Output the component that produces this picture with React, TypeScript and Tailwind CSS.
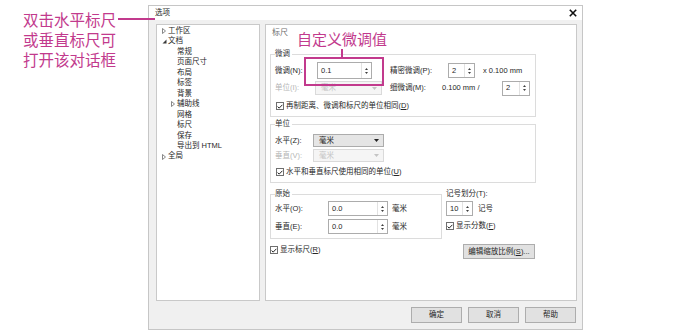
import React from "react";

type Node = { label: string; level: number; icon?: "open" | "closed" };

const treeItems: Node[] = [
  { label: "工作区", level: 0, icon: "closed" },
  { label: "文档", level: 0, icon: "open" },
  { label: "常规", level: 1 },
  { label: "页面尺寸", level: 1 },
  { label: "布局", level: 1 },
  { label: "标签", level: 1 },
  { label: "背景", level: 1 },
  { label: "辅助线", level: 1, icon: "closed" },
  { label: "网格", level: 1 },
  { label: "标尺", level: 1 },
  { label: "保存", level: 1 },
  { label: "导出到 HTML", level: 1 },
  { label: "全局", level: 0, icon: "closed" },
];

const TreeIcon = ({ icon }: { icon?: "open" | "closed" }) => {
  if (icon === "closed")
    return (
      <svg width="4" height="6" viewBox="0 0 4 6" className="block">
        <path d="M0.5 0.5 L3.5 3 L0.5 5.5 Z" fill="none" stroke="#6b6b6b" strokeWidth="0.8" />
      </svg>
    );
  if (icon === "open")
    return (
      <svg width="5" height="5" viewBox="0 0 5 5" className="block">
        <path d="M4.5 0.5 L4.5 4.5 L0.5 4.5 Z" fill="#3a3a3a" />
      </svg>
    );
  return null;
};

const Spin = ({ value, className }: { value: string; className: string }) => (
  <div className={`flex border border-[#acacac] bg-white ${className}`}>
    <span className="flex flex-1 items-center pl-[3px]">{value}</span>
    <div className="flex w-[10px] flex-col items-center justify-center gap-[2px] border-l border-[#e2e2e2]">
      <svg width="3" height="2" viewBox="0 0 3 2" className="block">
        <path d="M1.5 0 L3 2 L0 2 Z" fill="#404040" />
      </svg>
      <svg width="3" height="2" viewBox="0 0 3 2" className="block">
        <path d="M0 0 L3 0 L1.5 2 Z" fill="#404040" />
      </svg>
    </div>
  </div>
);

const Select = ({
  value,
  disabled,
  className,
}: {
  value: string;
  disabled?: boolean;
  className: string;
}) => (
  <div
    className={`flex items-center justify-between border pl-[5px] pr-[4px] ${
      disabled
        ? "border-[#dadada] bg-[#f5f5f5] text-[#c4c4c4]"
        : "border-[#acacac] bg-[#e5e5e5] text-[#222]"
    } ${className}`}
  >
    <span>{value}</span>
    <svg width="5" height="3" viewBox="0 0 5 3" className="block">
      <path d="M0 0 L5 0 L2.5 3 Z" fill={disabled ? "#c4c4c4" : "#222"} />
    </svg>
  </div>
);

const Check = ({ children, className = "" }: { children: React.ReactNode; className?: string }) => (
  <div className={`flex h-[12px] items-center gap-[2px] ${className}`}>
    <span className="flex h-[8px] w-[8px] items-center justify-center border border-[#6f6f6f] bg-white">
      <svg width="6" height="5" viewBox="0 0 6 5" className="block">
        <path d="M0.6 2.6 L2.2 4.1 L5.4 0.8" fill="none" stroke="#222" strokeWidth="1" />
      </svg>
    </span>
    <span>{children}</span>
  </div>
);

const Group = ({
  title,
  className,
  children,
}: {
  title: string;
  className: string;
  children: React.ReactNode;
}) => (
  <fieldset className={`min-w-0 border border-[#dcdcdc] px-[4px] pb-[4px] ${className}`}>
    <legend className="pr-[2px] leading-[10px] text-[#333]">{title}</legend>
    {children}
  </fieldset>
);

const Tree = () => (
  <div className="w-[104px] shrink-0 border border-[#c9c9c9] bg-white pt-[1px] leading-[10.45px]">
    {treeItems.map((item) => (
      <div
        key={item.label}
        className={`flex items-center ${item.level === 0 ? "pl-[5px]" : "pl-[14px]"}`}
      >
        <span className="flex w-[6px] items-center">
          <TreeIcon icon={item.icon} />
        </span>
        <span>{item.label}</span>
      </div>
    ))}
  </div>
);

const RulerPanel = () => (
  <div className="flex-1 border border-[#c9c9c9] bg-white pl-[4px] pt-[2px]">
    <div className="ml-[2px] text-[8px] leading-[12px] text-[#707070]">标尺</div>

    <Group title="微调" className="mt-[10px] w-[266px]">
      <div className="mt-[3px] flex h-[17px] items-center">
        <span className="w-[42px]">微调(N):</span>
        <Spin value="0.1" className="h-[17px] w-[55px]" />
        <span className="ml-[18px] w-[58px]">精密微调(P):</span>
        <Spin value="2" className="h-[15px] w-[27px]" />
        <span className="ml-[8px]">x 0.100 mm</span>
      </div>
      <div className="mt-[1px] flex h-[16px] items-center">
        <span className="w-[40px] text-[#b4b4b4]">单位(I):</span>
        <Select value="毫米" disabled className="h-[14px] w-[67px]" />
        <span className="ml-[8px] w-[52px]">细微调(M):</span>
        <span className="w-[60px]">0.100 mm /</span>
        <Spin value="2" className="h-[15px] w-[28px]" />
      </div>
      <Check className="ml-[1px] mt-[4px]">
        再制距离、微调和标尺的单位相同(<span className="underline">D</span>)
      </Check>
    </Group>

    <Group title="单位" className="mt-[2px] w-[266px]">
      <div className="mt-[5px] flex h-[13px] items-center">
        <span className="w-[38px]">水平(Z):</span>
        <Select value="毫米" className="h-[13px] w-[71px]" />
      </div>
      <div className="mt-[2px] flex h-[13px] items-center">
        <span className="w-[38px] text-[#b4b4b4]">垂直(V):</span>
        <Select value="毫米" disabled className="h-[13px] w-[71px]" />
      </div>
      <Check className="ml-[1px] mt-[4px]">
        水平和垂直标尺使用相同的单位(<span className="underline">U</span>)
      </Check>
    </Group>

    <div className="mt-[6px] flex">
      <Group title="原始" className="w-[172px]">
        <div className="mt-[2px] flex h-[15px] items-center">
          <span className="w-[53px]">水平(O):</span>
          <Spin value="0.0" className="h-[15px] w-[60px]" />
          <span className="ml-[4px]">毫米</span>
        </div>
        <div className="mt-[3px] flex h-[15px] items-center">
          <span className="w-[53px]">垂直(E):</span>
          <Spin value="0.0" className="h-[15px] w-[60px]" />
          <span className="ml-[4px]">毫米</span>
        </div>
      </Group>
      <div className="ml-[4px] flex flex-col">
        <span className="leading-[10px]">记号划分(T):</span>
        <div className="mt-[2px] flex h-[15px] items-center">
          <Spin value="10" className="h-[15px] w-[27px]" />
          <span className="ml-[5px]">记号</span>
        </div>
        <Check className="mt-[4px]">
          显示分数(<span className="underline">F</span>)
        </Check>
      </div>
    </div>

    <div className="mt-[5px] flex w-[266px] items-start justify-between">
      <Check>
        显示标尺(<span className="underline">R</span>)
      </Check>
      <button className="mr-[1px] flex h-[15px] w-[72px] items-center justify-center border border-[#adadad] bg-[#e1e1e1]">
        编辑缩放比例(<span className="underline">S</span>)...
      </button>
    </div>
  </div>
);

const Dialog = () => (
  <div className="mt-[5px] flex h-[325px] w-[435px] shrink-0 flex-col border border-[#c6c6c6] bg-[#f0f0f0] text-[7.5px] leading-[10px] text-[#262626]">
    <div className="flex h-[14px] items-center justify-between bg-white pl-[6px] pr-[5px]">
      <span>选项</span>
      <svg width="8" height="8" viewBox="0 0 8 8" className="block">
        <path d="M0.8 0.8 L7.2 7.2 M7.2 0.8 L0.8 7.2" stroke="#111" strokeWidth="1.6" />
      </svg>
    </div>
    <div className="flex flex-1 flex-col pb-[6px] pl-[7px] pr-[5px] pt-[4px]">
      <div className="flex h-[277px] gap-[5px]">
        <Tree />
        <RulerPanel />
      </div>
      <div className="mt-[6px] flex justify-end gap-[6px] pr-[1px]">
        {["确定", "取消", "帮助"].map((b) => (
          <button
            key={b}
            className="flex h-[16px] w-[51px] items-center justify-center border border-[#adadad] bg-[#e1e1e1]"
          >
            {b}
          </button>
        ))}
      </div>
    </div>
  </div>
);

export default function App() {
  return (
    <div className="relative flex h-[333px] w-[699px] overflow-hidden bg-white font-['Liberation_Sans','Noto_Sans_CJK_SC',sans-serif]">
      <div className="w-[148px] shrink-0 pl-[23px] pt-[9px] font-['Noto_Sans_CJK_SC',sans-serif] text-[15.5px] leading-[20px] text-[#c23a8d]">
        <p>双击水平标尺</p>
        <p>或垂直标尺可</p>
        <p>打开该对话框</p>
      </div>
      <div className="absolute left-[118px] top-[18px] h-[2px] w-[37px] bg-[#c23a8d]" />

      <Dialog />

      {/* callout over the nudge field */}
      <div className="absolute left-[297px] top-[29px] font-['Noto_Sans_CJK_SC',sans-serif] text-[15px] leading-[20px] text-[#c23a8d]">
        自定义微调值
      </div>
      <div className="absolute left-[341px] top-[49px] h-[9px] w-[2px] bg-[#c23a8d]" />
      <div className="absolute left-[304px] top-[57px] h-[29px] w-[80px] border-2 border-[#c23a8d]" />
    </div>
  );
}
